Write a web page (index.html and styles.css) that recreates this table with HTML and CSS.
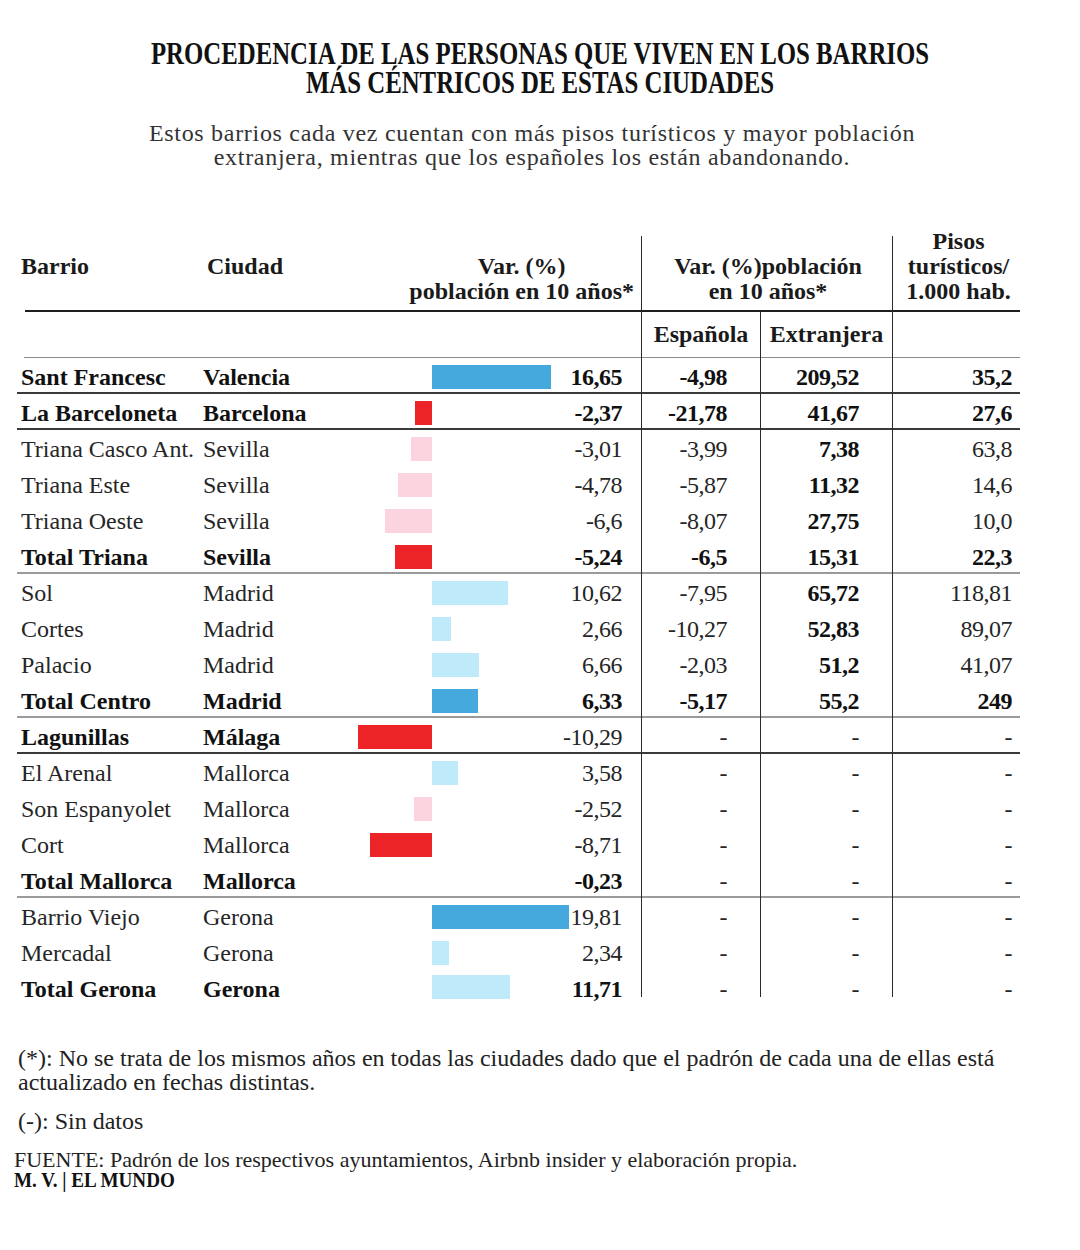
FILE: index.html
```html
<!DOCTYPE html>
<html lang="es">
<head>
<meta charset="utf-8">
<title>Procedencia de las personas</title>
<link rel="stylesheet" href="styles.css">
</head>
<body>
<div class="page">
  <h1 class="title">PROCEDENCIA DE LAS PERSONAS QUE VIVEN EN LOS BARRIOS<br>MÁS CÉNTRICOS DE ESTAS CIUDADES</h1>
  <p class="subtitle">Estos barrios cada vez cuentan con más pisos turísticos y mayor población<br>extranjera, mientras que los españoles los están abandonando.</p>

  <div class="table">
    <div class="hrow hrow1">
      <div class="hcell h-low">Barrio</div>
      <div class="hcell h-low">Ciudad</div>
      <div class="hcell h-var"><div class="hstack">Var. (%)<br>población en 10 años*</div></div>
      <div class="hcell h-grp vline"><div class="hstack">Var. (%)población<br>en 10 años*</div></div>
      <div class="hcell h-pis vline"><div class="hstack">Pisos<br>turísticos/<br>1.000 hab.</div></div>
    </div>
    <div class="hrow hrow2">
      <div class="scell s-empty"></div>
      <div class="scell vline">Española</div>
      <div class="scell vline">Extranjera</div>
      <div class="scell vline"></div>
    </div>

    <div class="row tot dark">
      <div class="c-barrio">Sant Francesc</div><div class="c-ciudad">Valencia</div>
      <div class="c-bar"><span class="bar pos dblue" style="width:119px"></span></div>
      <div class="c-num">16,65</div><div class="c-esp">-4,98</div><div class="c-ext">209,52</div><div class="c-pis">35,2</div>
    </div>
    <div class="row tot dark">
      <div class="c-barrio">La Barceloneta</div><div class="c-ciudad">Barcelona</div>
      <div class="c-bar"><span class="bar neg red" style="width:17px"></span></div>
      <div class="c-num">-2,37</div><div class="c-esp">-21,78</div><div class="c-ext">41,67</div><div class="c-pis">27,6</div>
    </div>
    <div class="row">
      <div class="c-barrio">Triana Casco Ant.</div><div class="c-ciudad">Sevilla</div>
      <div class="c-bar"><span class="bar neg pink" style="width:21px"></span></div>
      <div class="c-num">-3,01</div><div class="c-esp">-3,99</div><div class="c-ext b">7,38</div><div class="c-pis">63,8</div>
    </div>
    <div class="row">
      <div class="c-barrio">Triana Este</div><div class="c-ciudad">Sevilla</div>
      <div class="c-bar"><span class="bar neg pink" style="width:34px"></span></div>
      <div class="c-num">-4,78</div><div class="c-esp">-5,87</div><div class="c-ext b">11,32</div><div class="c-pis">14,6</div>
    </div>
    <div class="row">
      <div class="c-barrio">Triana Oeste</div><div class="c-ciudad">Sevilla</div>
      <div class="c-bar"><span class="bar neg pink" style="width:47px"></span></div>
      <div class="c-num">-6,6</div><div class="c-esp">-8,07</div><div class="c-ext b">27,75</div><div class="c-pis">10,0</div>
    </div>
    <div class="row tot gray">
      <div class="c-barrio">Total Triana</div><div class="c-ciudad">Sevilla</div>
      <div class="c-bar"><span class="bar neg red" style="width:37px"></span></div>
      <div class="c-num">-5,24</div><div class="c-esp">-6,5</div><div class="c-ext">15,31</div><div class="c-pis">22,3</div>
    </div>
    <div class="row">
      <div class="c-barrio">Sol</div><div class="c-ciudad">Madrid</div>
      <div class="c-bar"><span class="bar pos lblue" style="width:76px"></span></div>
      <div class="c-num">10,62</div><div class="c-esp">-7,95</div><div class="c-ext b">65,72</div><div class="c-pis">118,81</div>
    </div>
    <div class="row">
      <div class="c-barrio">Cortes</div><div class="c-ciudad">Madrid</div>
      <div class="c-bar"><span class="bar pos lblue" style="width:19px"></span></div>
      <div class="c-num">2,66</div><div class="c-esp">-10,27</div><div class="c-ext b">52,83</div><div class="c-pis">89,07</div>
    </div>
    <div class="row">
      <div class="c-barrio">Palacio</div><div class="c-ciudad">Madrid</div>
      <div class="c-bar"><span class="bar pos lblue" style="width:47px"></span></div>
      <div class="c-num">6,66</div><div class="c-esp">-2,03</div><div class="c-ext b">51,2</div><div class="c-pis">41,07</div>
    </div>
    <div class="row tot gray">
      <div class="c-barrio">Total Centro</div><div class="c-ciudad">Madrid</div>
      <div class="c-bar"><span class="bar pos dblue" style="width:46px"></span></div>
      <div class="c-num">6,33</div><div class="c-esp">-5,17</div><div class="c-ext">55,2</div><div class="c-pis">249</div>
    </div>
    <div class="row dark">
      <div class="c-barrio b">Lagunillas</div><div class="c-ciudad b">Málaga</div>
      <div class="c-bar"><span class="bar neg red" style="width:74px"></span></div>
      <div class="c-num">-10,29</div><div class="c-esp">-</div><div class="c-ext">-</div><div class="c-pis">-</div>
    </div>
    <div class="row">
      <div class="c-barrio">El Arenal</div><div class="c-ciudad">Mallorca</div>
      <div class="c-bar"><span class="bar pos lblue" style="width:26px"></span></div>
      <div class="c-num">3,58</div><div class="c-esp">-</div><div class="c-ext">-</div><div class="c-pis">-</div>
    </div>
    <div class="row">
      <div class="c-barrio">Son Espanyolet</div><div class="c-ciudad">Mallorca</div>
      <div class="c-bar"><span class="bar neg pink" style="width:18px"></span></div>
      <div class="c-num">-2,52</div><div class="c-esp">-</div><div class="c-ext">-</div><div class="c-pis">-</div>
    </div>
    <div class="row">
      <div class="c-barrio">Cort</div><div class="c-ciudad">Mallorca</div>
      <div class="c-bar"><span class="bar neg red" style="width:62px"></span></div>
      <div class="c-num">-8,71</div><div class="c-esp">-</div><div class="c-ext">-</div><div class="c-pis">-</div>
    </div>
    <div class="row gray">
      <div class="c-barrio b">Total Mallorca</div><div class="c-ciudad b">Mallorca</div>
      <div class="c-bar"></div>
      <div class="c-num b">-0,23</div><div class="c-esp">-</div><div class="c-ext">-</div><div class="c-pis">-</div>
    </div>
    <div class="row">
      <div class="c-barrio">Barrio Viejo</div><div class="c-ciudad">Gerona</div>
      <div class="c-bar"><span class="bar pos dblue" style="width:137px"></span></div>
      <div class="c-num">19,81</div><div class="c-esp">-</div><div class="c-ext">-</div><div class="c-pis">-</div>
    </div>
    <div class="row">
      <div class="c-barrio">Mercadal</div><div class="c-ciudad">Gerona</div>
      <div class="c-bar"><span class="bar pos lblue" style="width:17px"></span></div>
      <div class="c-num">2,34</div><div class="c-esp">-</div><div class="c-ext">-</div><div class="c-pis">-</div>
    </div>
    <div class="row last">
      <div class="c-barrio b">Total Gerona</div><div class="c-ciudad b">Gerona</div>
      <div class="c-bar"><span class="bar pos lblue" style="width:78px"></span></div>
      <div class="c-num b">11,71</div><div class="c-esp">-</div><div class="c-ext">-</div><div class="c-pis">-</div>
    </div>
  </div>

  <div class="notes">
    <p class="note">(*): No se trata de los mismos años en todas las ciudades dado que el padrón de cada una de ellas está<br>actualizado en fechas distintas.</p>
    <p class="note note2">(-): Sin datos</p>
    <p class="source">FUENTE: Padrón de los respectivos ayuntamientos, Airbnb insider y elaboración propia.</p>
    <p class="credit"><span class="cond">M. V. | EL MUNDO</span></p>
  </div>
</div>
</body>
</html>
```

FILE: styles.css
```css
* { box-sizing: border-box; }

html, body {
  margin: 0;
  padding: 0;
  background: #ffffff;
}

body {
  font-family: "Liberation Serif", "Times New Roman", serif;
  color: #1c1c1c;
}

.page {
  width: 1080px;
  height: 1250px;
  padding-top: 39px;
  overflow: hidden;
}

.title {
  margin: 0;
  font-size: 32px;
  line-height: 29px;
  font-weight: 700;
  text-align: center;
  color: #111;
  transform: scaleX(0.775);
  transform-origin: 540px 0;
}

.subtitle {
  margin: 24px 0 0;
  font-size: 24px;
  line-height: 24px;
  letter-spacing: 0.7px;
  text-align: center;
  color: #333;
  padding-right: 16px;
}

/* ---------- table ---------- */
.table {
  margin: 67px 0 0 17px;
  width: 1003px;
}

.hrow, .row {
  display: grid;
  grid-template-columns: 186px 127px 230px 81px 119px 132px 128px;
}

.hrow1 {
  height: 76px;
  grid-template-columns: 186px 127px 311px 251px 128px;
  grid-template-rows: 76px;
  background: linear-gradient(#1e1e1e, #1e1e1e) no-repeat right bottom / calc(100% - 8px) 2px;
}

.hcell {
  display: flex;
  flex-direction: column;
  justify-content: flex-end;
  min-height: 0;
  font-weight: 700;
  font-size: 24px;
  line-height: 25px;
  color: #1a1a1a;
  white-space: nowrap;
  padding-bottom: 8px;
}

.h-low {
  padding-left: 4px;
  padding-bottom: 33px;
}

.h-var {
  align-items: flex-end;
  padding-right: 7px;
}

.hstack { text-align: center; }

.h-grp { align-items: center; padding-left: 2px; }
.h-pis { align-items: center; padding-left: 4px; }

.vline { border-left: 1px solid #2a2a2a; }

.hrow2 {
  height: 46px;
  grid-template-columns: 624px 119px 132px 128px;
  grid-template-rows: 46px;
  background: linear-gradient(#8c8c8c, #8c8c8c) no-repeat right bottom / calc(100% - 7px) 1px;
}

.scell {
  display: flex;
  align-items: center;
  justify-content: center;
  font-weight: 700;
  font-size: 24px;
  line-height: 25px;
  color: #1a1a1a;
  padding-bottom: 2px;
}

.row {
  height: 36px;
  font-size: 24px;
  line-height: 36px;
  color: #262626;
  white-space: nowrap;
}

.row.dark { border-bottom: 2px solid #3a3a3a; }
.row.gray { border-bottom: 2px solid #9a9a9a; }
.row.last { height: 27px; grid-template-rows: 27px; }

.row > div { padding-top: 1px; }

.row.tot > div, .b { font-weight: 700; color: #111; }

.c-barrio { padding-left: 4px; }
.c-ciudad { padding-left: 0; }

.c-bar {
  display: flex;
  align-items: center;
  min-width: 0;
}

.row.last .c-bar {
  align-items: flex-start;
  padding-top: 5px;
}

.bar {
  display: block;
  flex-shrink: 0;
  height: 24px;
}
.bar.pos { margin-left: 102px; }
.bar.neg { margin-left: auto; margin-right: 128px; }

.dblue { background: #45a9de; }
.lblue { background: #bfeaf9; }
.red   { background: #ec2327; }
.pink  { background: #fcd4df; }

.c-num, .c-esp, .c-ext, .c-pis { letter-spacing: -0.5px; }

.c-num { text-align: right; padding-right: 19px; }
.c-esp { text-align: right; padding-right: 33px; border-left: 1px solid #2a2a2a; }
.c-ext { text-align: right; padding-right: 33px; border-left: 1px solid #2a2a2a; }
.c-pis { text-align: right; padding-right: 8px; border-left: 1px solid #2a2a2a; }

.c-ext.b { font-weight: 700; color: #111; }

/* ---------- notes ---------- */
.notes {
  margin-top: 49px;
  color: #222;
}

.note {
  margin: 0 0 0 18px;
  font-size: 24px;
  line-height: 24px;
}

.note2 { margin-top: 15px; }

.source {
  margin: 17px 0 0 14px;
  font-size: 22px;
  line-height: 20px;
}

.credit {
  margin: 0 0 0 14px;
  font-size: 22px;
  line-height: 20px;
  font-weight: 700;
  color: #111;
}

.cond {
  display: inline-block;
  transform: scaleX(0.87);
  transform-origin: 0 0;
}
```
